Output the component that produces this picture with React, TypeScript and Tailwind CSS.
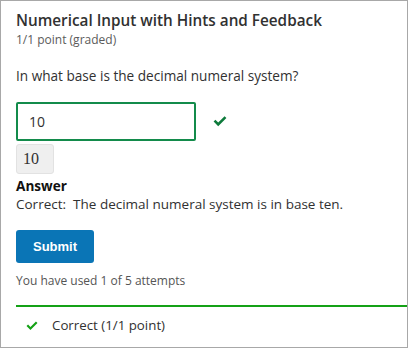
const CheckMark = ({ className }: { className: string }) => (
  <svg viewBox="0 0 14 11" className={className} fill="currentColor">
    <path d="M0.6 5.6 L2.4 3.8 L5.2 6.6 L11.6 0.2 L13.4 2 L5.2 10.2 Z" />
  </svg>
);

export default function App() {
  return (
    <div className="w-[408px] h-[348px] border border-[#a8a8a8] bg-white font-['Open_Sans',sans-serif] text-[#313131] overflow-hidden">
      <div className="pl-[15px] pt-[8px]">
        <h2 className="text-[15.3px] leading-[22px] font-semibold text-[#313131]">
          Numerical Input with Hints and Feedback
        </h2>
        <div className="mt-[1px] text-[12px] leading-[16px] text-[#5b5b5b]">
          1/1 point (graded)
        </div>
        <p className="text-[13.6px] leading-[20px] mt-[18px]">
          In what base is the decimal numeral system?
        </p>
        <div className="flex items-center mt-[16px]">
          <div className="w-[180px] h-[39px] border-2 border-[#138b4b] rounded-[2px] flex items-center pl-[11px] text-[14px]">
            10
          </div>
          <CheckMark className="w-[14px] h-[11px] ml-[17px] text-[#0d7a3b]" />
        </div>
        <div className="mt-[3px] w-[38px] h-[30px] bg-[#efefef] border border-[#e2e2e2] rounded-[3px] flex items-center pl-[6px] font-['Liberation_Serif',serif] text-[16px]">
          10
        </div>
        <div className="mt-[3px] text-[13.6px] leading-[18px] font-bold text-[#111]">
          Answer
        </div>
        <div className="text-[13.5px] leading-[18px] whitespace-pre">
          Correct:  The decimal numeral system is in base ten.
        </div>
        <button className="mt-[17px] w-[78px] h-[33px] rounded-[3px] bg-[#0a75b6] text-white font-['Liberation_Sans',sans-serif] font-bold text-[13px]">
          Submit
        </button>
        <div className="mt-[10px] text-[12px] leading-[16px] text-[#555]">
          You have used 1 of 5 attempts
        </div>
        <div className="mt-[16px] h-[2px] bg-[#14a116]" />
        <div className="flex items-center h-[38px] text-[13.3px]">
          <CheckMark className="w-[12px] h-[10px] ml-[10px] text-[#14a116]" />
          <span className="ml-[14px]">Correct (1/1 point)</span>
        </div>
      </div>
    </div>
  );
}
